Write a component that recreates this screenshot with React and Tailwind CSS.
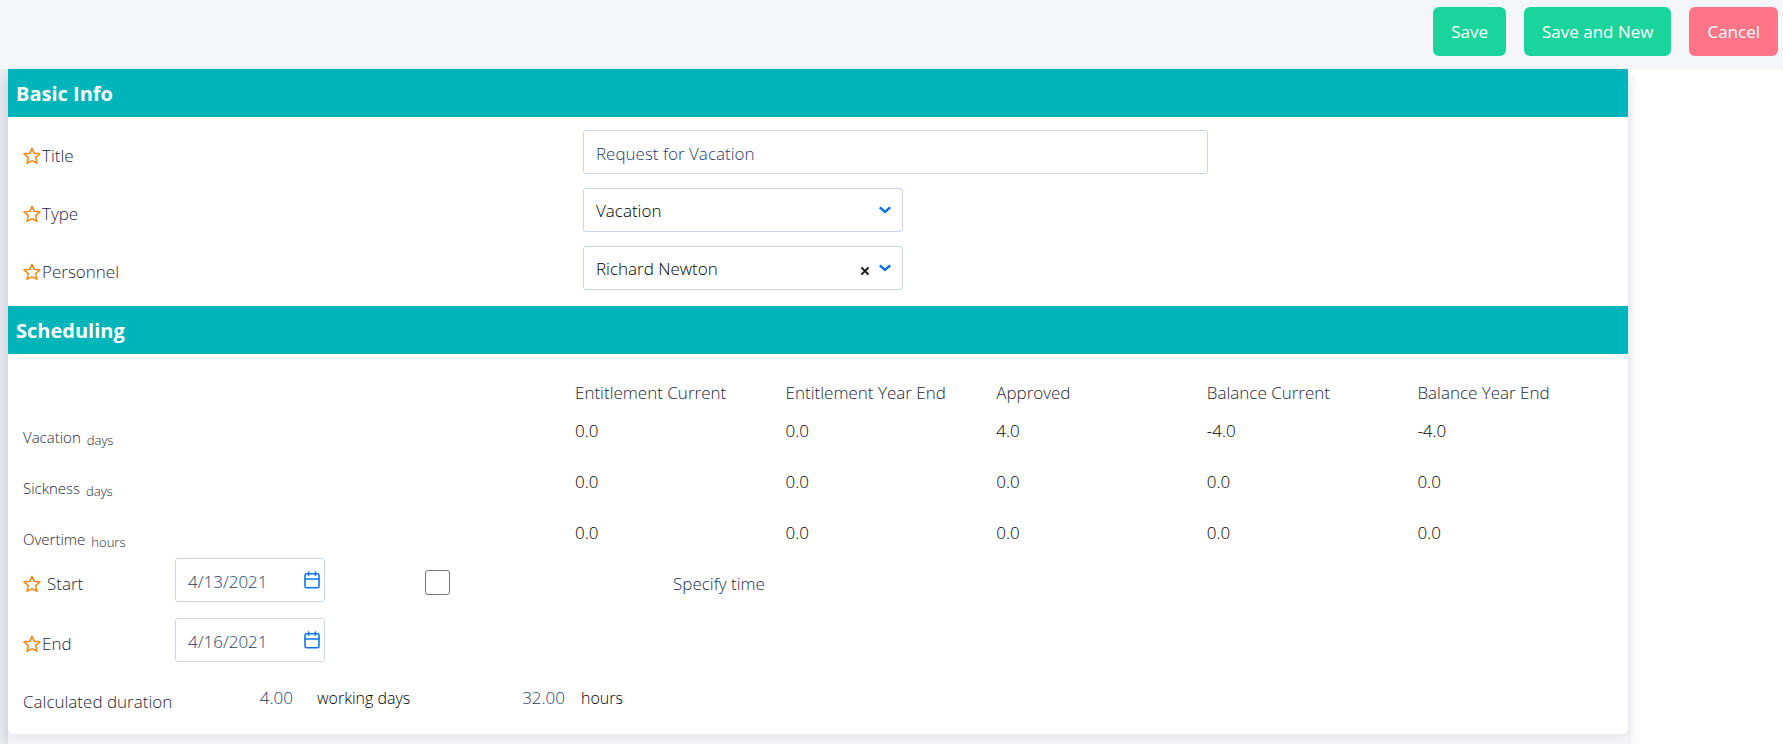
import React, { useState } from "react";

const columns = [
  "Entitlement Current",
  "Entitlement Year End",
  "Approved",
  "Balance Current",
  "Balance Year End",
];

const balances = [
  { name: "Vacation", unit: "days", values: ["0.0", "0.0", "4.0", "-4.0", "-4.0"] },
  { name: "Sickness", unit: "days", values: ["0.0", "0.0", "0.0", "0.0", "0.0"] },
  { name: "Overtime", unit: "hours", values: ["0.0", "0.0", "0.0", "0.0", "0.0"] },
];

function Star() {
  return (
    <svg className="h-[18px] w-[18px] shrink-0" viewBox="0 0 18 18" fill="none" stroke="#fd8b1c" strokeWidth="1.6" strokeLinejoin="round" aria-hidden="true">
      <path d="M9 1.4 11.2 6.3 16.9 6.9 12.7 10.7 13.9 16.3 9 13.6 4.1 16.3 5.3 10.7 1.1 6.9 6.8 6.3Z" />
    </svg>
  );
}

function Chevron() {
  return (
    <svg className="pointer-events-none absolute top-4 right-3 h-3 w-3" viewBox="0 0 12 12" fill="none" stroke="#0070e0" strokeWidth="2.4" aria-hidden="true">
      <path d="M.8 3.4 6 8 11.2 3.4" />
    </svg>
  );
}

function CalendarIcon() {
  return (
    <svg className="h-[18px] w-4" viewBox="0 0 16 18" fill="none" stroke="#0a78f0" strokeWidth="1.6" strokeLinecap="round" aria-hidden="true">
      <rect x="1" y="2.8" width="14" height="14" rx="1.6" />
      <path d="M1 8H15M4.6 1V4.2M11.4 1V4.2" />
    </svg>
  );
}

function SectionHeader({ children }) {
  return (
    <h2 className="h-12 bg-[#00b5b9] px-2 text-[20px] leading-[50px] font-bold text-white">
      {children}
    </h2>
  );
}

function FieldRow({ id, label, children }) {
  return (
    <div className="flex items-start">
      <div className="w-[35%] shrink-0 pt-3 pl-[15px]">
        <label htmlFor={id} className="flex items-center gap-px leading-7 text-[#24273c]">
          <Star />
          {label}
        </label>
      </div>
      <div className="grow pl-2">{children}</div>
    </div>
  );
}

const boxClass = "h-11 w-full rounded-[3px] border border-[#c9d5e6] bg-white px-3 pt-[2px] outline-none";

function DateField({ id, value, onChange }) {
  return (
    <div className="relative w-[150px]">
      <input id={id} type="text" value={value} onChange={(e) => onChange(e.target.value)} className={boxClass + " text-[#1f3d6b]"} />
      <button type="button" aria-label="Open calendar" className="absolute top-[13px] right-[5px]">
        <CalendarIcon />
      </button>
    </div>
  );
}

export default function App() {
  const [title, setTitle] = useState("Request for Vacation");
  const [start, setStart] = useState("4/13/2021");
  const [end, setEnd] = useState("4/16/2021");

  return (
    <div className="flex h-screen flex-col overflow-hidden bg-white font-['Open_Sans','Noto_Sans',sans-serif] text-[17px] font-[350] text-black">
      <header className="flex h-[69px] shrink-0 items-start justify-end gap-[18px] bg-[#f5f6fa] pt-[7px] pr-[5px] font-normal text-white">
        <button type="button" className="h-[49px] rounded-md bg-[#19d59b] px-[18px]">Save</button>
        <button type="button" className="h-[49px] rounded-md bg-[#19d59b] px-[18px]">Save and New</button>
        <button type="button" className="h-[49px] rounded-md bg-[#ff7588] px-[18px]">Cancel</button>
      </header>

      <main className="flex grow">
        <div className="w-2 shrink-0 bg-[#ebebf0]" />
        <div className="mr-[155px] grow bg-[#f5f5f9] shadow-[0_10px_12px_rgba(60,60,100,0.14)]">
          <form className="rounded-b-md bg-white pb-4 shadow-[0_4px_12px_rgba(60,60,100,0.08)]">
            <section>
              <SectionHeader>Basic Info</SectionHeader>
              <div className="flex flex-col gap-[14px] pt-[13px] pb-4">
                <FieldRow id="title" label="Title">
                  <input id="title" type="text" value={title} onChange={(e) => setTitle(e.target.value)} className={boxClass + " max-w-[625px] text-[#1f3d6b]"} />
                </FieldRow>
                <FieldRow id="type" label="Type">
                  <div className="relative w-[320px]">
                    <select id="type" className={boxClass + " appearance-none"}>
                      <option>Vacation</option>
                    </select>
                    <Chevron />
                  </div>
                </FieldRow>
                <FieldRow id="personnel" label="Personnel">
                  <div className="relative w-[320px]">
                    <select id="personnel" className={boxClass + " appearance-none"}>
                      <option>Richard Newton</option>
                    </select>
                    <button type="button" aria-label="Clear personnel" className="absolute top-5 right-[33px]">
                      <svg className="h-[10px] w-[10px]" viewBox="0 0 10 10" stroke="#111" strokeWidth="2" aria-hidden="true">
                        <path d="M1.4 1.4 8.6 8.6M8.6 1.4 1.4 8.6" />
                      </svg>
                    </button>
                    <Chevron />
                  </div>
                </FieldRow>
              </div>
            </section>

            <section>
              <SectionHeader>Scheduling</SectionHeader>
              <table className="w-full table-fixed text-left">
                <thead>
                  <tr className="h-[52px] align-bottom text-[#24273c]">
                    <td className="w-[35%]" />
                    {columns.map((c) => (
                      <th key={c} scope="col" className="p-0 leading-[26px] font-[350]">{c}</th>
                    ))}
                  </tr>
                </thead>
                <tbody>
                  {balances.map((row) => (
                    <tr key={row.name} className="h-[51px] align-top">
                      <th scope="row" className="p-0 pt-[18px] pl-[15px] text-[15px] leading-[26px] font-[350] text-[#24273c]">
                        <span className="flex gap-[6px]">
                          {row.name}
                          <sub className="text-[13px] leading-[26px]">{row.unit}</sub>
                        </span>
                      </th>
                      {row.values.map((v, i) => (
                        <td key={columns[i]} className="p-0 pt-3 leading-[26px]">{v}</td>
                      ))}
                    </tr>
                  ))}
                </tbody>
              </table>

              <div className="-mt-px flex flex-col gap-4 pl-[15px]">
                <div className="flex items-start">
                  <label htmlFor="start" className="flex w-38 shrink-0 items-center gap-[6px] pt-3 leading-7 text-[#24273c]">
                    <Star />
                    Start
                  </label>
                  <DateField id="start" value={start} onChange={setStart} />
                  <input id="specify-time" type="checkbox" className="mt-3 ml-[100px] h-[25px] w-[25px] appearance-none rounded-[3px] border border-[#767676] bg-white checked:bg-[#0a78f0]" />
                  <label htmlFor="specify-time" className="pt-3 pl-[223px] leading-7 text-[#1b2c50]">Specify time</label>
                </div>
                <div className="flex items-start">
                  <label htmlFor="end" className="flex w-38 shrink-0 items-center gap-px pt-3 leading-7 text-[#24273c]">
                    <Star />
                    End
                  </label>
                  <DateField id="end" value={end} onChange={setEnd} />
                </div>
                <div className="flex items-start pt-[6px] pb-[2px] leading-7">
                  <span className="w-[200px] pt-1 text-[#24273c]">Calculated duration</span>
                  <output className="w-[70px] text-right text-[#1f3d6b]">4.00</output>
                  <span className="w-[166px] pl-6 text-[16px]">working days</span>
                  <output className="w-[106px] text-right text-[#1f3d6b]">32.00</output>
                  <span className="pl-4 text-[16px]">hours</span>
                </div>
              </div>
            </section>
          </form>
        </div>
      </main>
    </div>
  );
}
